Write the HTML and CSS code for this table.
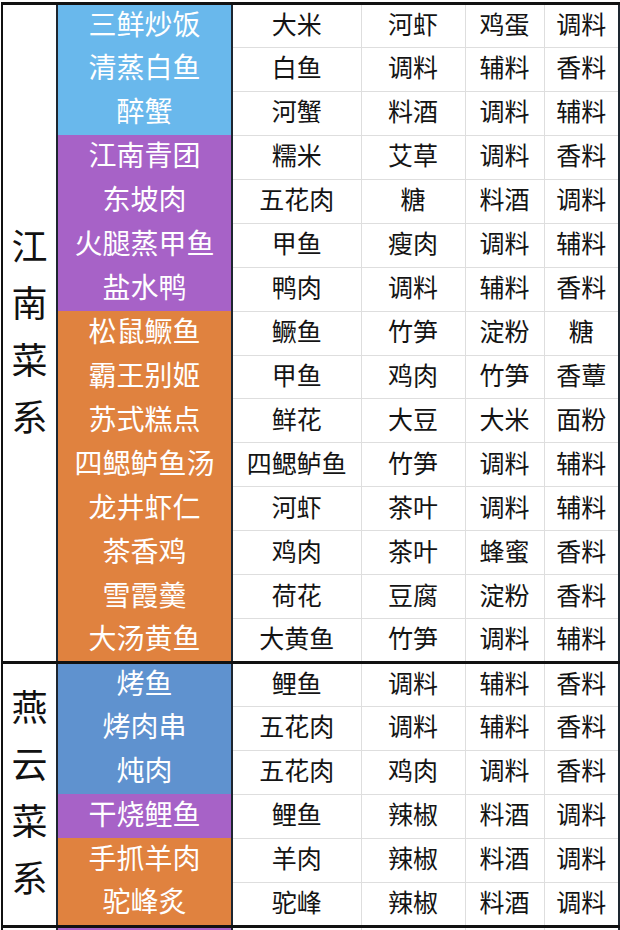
FILE: index.html
```html
<!DOCTYPE html>
<html lang="zh-CN">
<head>
<meta charset="utf-8">
<title>菜系表</title>
<link rel="stylesheet" href="styles.css">
</head>
<body>
<table class="menu">
  <colgroup>
    <col class="c-cat"><col class="c-dish"><col class="c-a"><col class="c-b"><col class="c-c"><col class="c-d">
  </colgroup>
  <tbody>
    <tr class="sec-start">
      <td class="cat" rowspan="15"><div class="cat-text"><span>江</span><span>南</span><span>菜</span><span>系</span></div></td>
      <td class="dish blue">三鲜炒饭</td><td>大米</td><td>河虾</td><td>鸡蛋</td><td>调料</td>
    </tr>
    <tr><td class="dish blue">清蒸白鱼</td><td>白鱼</td><td>调料</td><td>辅料</td><td>香料</td></tr>
    <tr><td class="dish blue">醉蟹</td><td>河蟹</td><td>料酒</td><td>调料</td><td>辅料</td></tr>
    <tr><td class="dish purple">江南青团</td><td>糯米</td><td>艾草</td><td>调料</td><td>香料</td></tr>
    <tr><td class="dish purple">东坡肉</td><td>五花肉</td><td>糖</td><td>料酒</td><td>调料</td></tr>
    <tr><td class="dish purple">火腿蒸甲鱼</td><td>甲鱼</td><td>瘦肉</td><td>调料</td><td>辅料</td></tr>
    <tr><td class="dish purple">盐水鸭</td><td>鸭肉</td><td>调料</td><td>辅料</td><td>香料</td></tr>
    <tr><td class="dish orange">松鼠鳜鱼</td><td>鳜鱼</td><td>竹笋</td><td>淀粉</td><td>糖</td></tr>
    <tr><td class="dish orange">霸王别姬</td><td>甲鱼</td><td>鸡肉</td><td>竹笋</td><td>香蕈</td></tr>
    <tr><td class="dish orange">苏式糕点</td><td>鲜花</td><td>大豆</td><td>大米</td><td>面粉</td></tr>
    <tr><td class="dish orange">四鳃鲈鱼汤</td><td>四鳃鲈鱼</td><td>竹笋</td><td>调料</td><td>辅料</td></tr>
    <tr><td class="dish orange">龙井虾仁</td><td>河虾</td><td>茶叶</td><td>调料</td><td>辅料</td></tr>
    <tr><td class="dish orange">茶香鸡</td><td>鸡肉</td><td>茶叶</td><td>蜂蜜</td><td>香料</td></tr>
    <tr><td class="dish orange">雪霞羹</td><td>荷花</td><td>豆腐</td><td>淀粉</td><td>香料</td></tr>
    <tr><td class="dish orange">大汤黄鱼</td><td>大黄鱼</td><td>竹笋</td><td>调料</td><td>辅料</td></tr>

    <tr class="sec-start">
      <td class="cat" rowspan="6"><div class="cat-text"><span>燕</span><span>云</span><span>菜</span><span>系</span></div></td>
      <td class="dish steel">烤鱼</td><td>鲤鱼</td><td>调料</td><td>辅料</td><td>香料</td>
    </tr>
    <tr><td class="dish steel">烤肉串</td><td>五花肉</td><td>调料</td><td>辅料</td><td>香料</td></tr>
    <tr><td class="dish steel">炖肉</td><td>五花肉</td><td>鸡肉</td><td>调料</td><td>香料</td></tr>
    <tr><td class="dish purple">干烧鲤鱼</td><td>鲤鱼</td><td>辣椒</td><td>料酒</td><td>调料</td></tr>
    <tr><td class="dish orange">手抓羊肉</td><td>羊肉</td><td>辣椒</td><td>料酒</td><td>调料</td></tr>
    <tr><td class="dish orange">驼峰炙</td><td>驼峰</td><td>辣椒</td><td>料酒</td><td>调料</td></tr>

    <tr class="sec-start">
      <td class="cat"></td>
      <td class="dish purple"></td><td></td><td></td><td></td><td></td>
    </tr>
  </tbody>
</table>
</body>
</html>
```

FILE: styles.css
```css
html, body {
  margin: 0;
  padding: 0;
  background: #ffffff;
  overflow: hidden;
}

body {
  height: 930px;
  font-family: "Noto Sans CJK SC", "Noto Sans", sans-serif;
}

.menu {
  margin: 2px 0 0 1px;
  border-collapse: collapse;
  table-layout: fixed;
  width: 617px;
  border-top: 2px solid #1d2630;
  border-right: 2px solid #1d2630;
}

.c-cat { width: 55px; }
.c-dish { width: 175px; }
.c-a { width: 129px; }
.c-b { width: 104px; }
.c-c { width: 79px; }
.c-d { width: 75px; }

.menu tr { height: 43.95px; }

.menu td {
  padding: 0 0 6px 0;
  border: 1px solid #dedede;
  text-align: center;
  vertical-align: middle;
  font-size: 25px;
  line-height: 30px;
  color: #141414;
  white-space: nowrap;
}

.menu tr.sec-start td {
  border-top: 3px solid #111111;
}

.menu td.cat {
  padding: 0;
  border-left: 2px solid #111111;
  border-right: 2px solid #1d2630;
  border-bottom: 0;
  background: #ffffff;
}

.cat-text {
  display: flex;
  flex-direction: column;
  align-items: center;
  gap: 21px;
  font-size: 36px;
  line-height: 36px;
  color: #111111;
  padding-bottom: 8px;
}

.menu td.dish {
  font-size: 28px;
  color: #ffffff;
  border-left: 2px solid #1d2630;
  border-right: 2px solid #1d2630;
  border-bottom: 0;
}

.menu tr:not(.sec-start) td.dish {
  border-top: 0;
}

.blue { background: #69b8ec; }
.purple { background: #a762c7; }
.orange { background: #e0823f; }
.steel { background: #5f92cf; }
```
